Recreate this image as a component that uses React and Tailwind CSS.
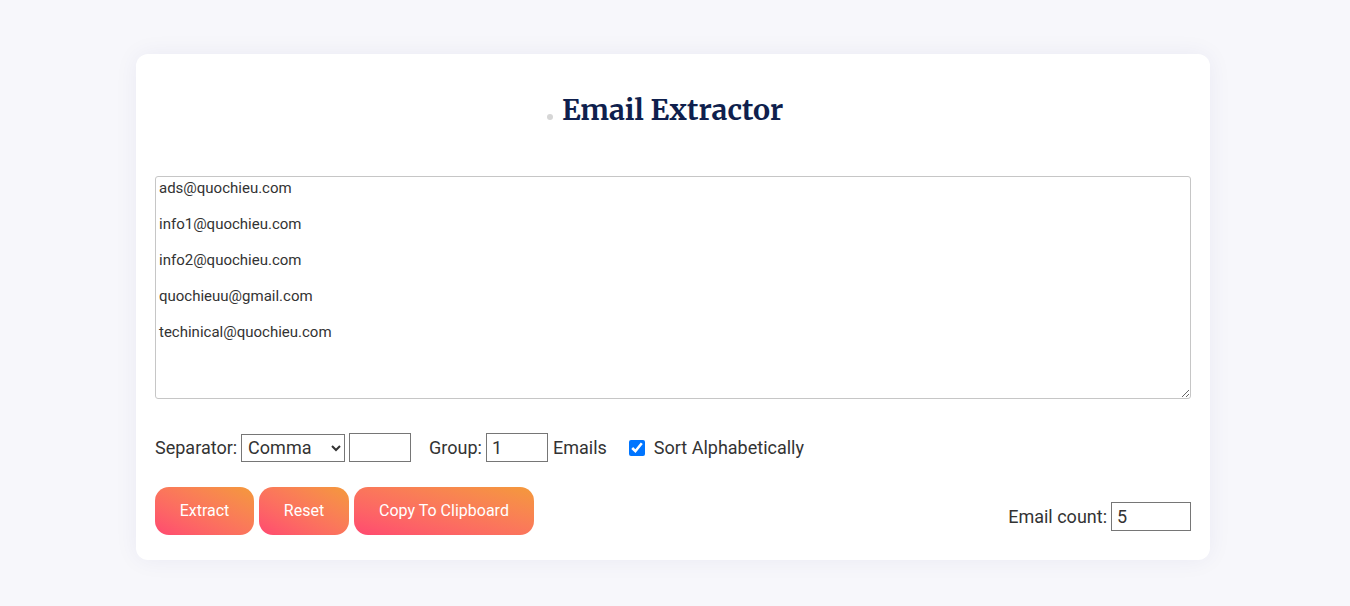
import { useState } from "react";

const sample = [
    "ads@quochieu.com",
    "",
    "info1@quochieu.com",
    "",
    "info2@quochieu.com",
    "",
    "quochieuu@gmail.com",
    "",
    "techinical@quochieu.com",
].join("\n");

const btn =
    "h-[48px] rounded-[14px] bg-linear-to-tr from-[#ff4870] to-[#f4993a] text-white text-[16px]";

export default function App() {
    const [text, setText] = useState(sample);
    const [separator, setSeparator] = useState("comma");
    const [custom, setCustom] = useState("");
    const [group, setGroup] = useState("1");
    const [sort, setSort] = useState(true);

    return (
        <div className="min-h-[606px] bg-[#f7f7fb] pt-[54px] font-['Roboto','Liberation_Sans',sans-serif] text-[#333]">
            <div className="ml-[136px] w-[1074px] rounded-[12px] bg-white px-[19px] pb-[25px] shadow-[0_0_24px_rgba(40,40,120,0.06)]">
                <div className="flex h-[122px] items-center justify-center pb-[10px] pr-[16px]">
                    <span className="mr-[9px] mt-[14px] h-[6px] w-[6px] rounded-full bg-[#d6d6d6]" />
                    <h1 className="font-['Merriweather','DejaVu_Serif',serif] text-[28.5px] font-bold text-[#0f1f4d]">
                        Email Extractor
                    </h1>
                </div>

                <textarea
                    value={text}
                    onChange={(e) => setText(e.target.value)}
                    className="block h-[223px] w-full rounded-[3px] border border-[#c6c6c6] px-[3px] py-[2px] text-[15px] leading-[18px] text-[#333] outline-none"
                />

                <div className="mt-[34px] flex items-center text-[18px]">
                    <span>Separator:</span>
                    <select
                        value={separator}
                        onChange={(e) => setSeparator(e.target.value)}
                        className="ml-[4px] h-[28px] w-[104px] border border-[#767676] bg-white px-[2px] text-[18px]"
                    >
                        <option value="comma">Comma</option>
                        <option value="newline">New Line</option>
                        <option value="space">Space</option>
                        <option value="other">Other</option>
                    </select>
                    <input
                        value={custom}
                        onChange={(e) => setCustom(e.target.value)}
                        className="ml-[4px] h-[29px] w-[62px] border border-[#767676] px-[4px]"
                    />
                    <span className="ml-[18px]">Group:</span>
                    <input
                        value={group}
                        onChange={(e) => setGroup(e.target.value)}
                        className="ml-[4px] h-[29px] w-[62px] border border-[#767676] px-[5px]"
                    />
                    <span className="ml-[5px]">Emails</span>
                    <input
                        type="checkbox"
                        checked={sort}
                        onChange={(e) => setSort(e.target.checked)}
                        className="ml-[22px] h-[16px] w-[16px] accent-[#0075ff]"
                    />
                    <span className="ml-[9px]">Sort Alphabetically</span>
                </div>

                <div className="mt-[25px] flex items-end justify-between">
                    <div className="flex gap-[5px]">
                        <button className={`${btn} w-[99px]`}>Extract</button>
                        <button className={`${btn} w-[90px]`}>Reset</button>
                        <button className={`${btn} w-[180px]`}>Copy To Clipboard</button>
                    </div>
                    <div className="mb-[4px] flex items-center text-[18px]">
                        <span>Email count:</span>
                        <input
                            readOnly
                            value="5"
                            className="ml-[4px] h-[29px] w-[80px] border border-[#767676] px-[5px]"
                        />
                    </div>
                </div>
            </div>
        </div>
    );
}
